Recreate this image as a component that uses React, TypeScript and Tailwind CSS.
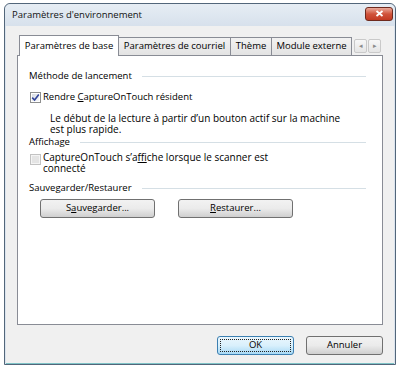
import React from "react";

const font = "font-['Open_Sans',sans-serif] text-[9.5px] text-black";

function Check({ checked, disabled }: { checked?: boolean; disabled?: boolean }) {
  return (
    <span
      className={`flex h-[11px] w-[11px] shrink-0 items-center justify-center border ${
        disabled ? "border-[#c2c2c2] bg-[#f4f4f4]" : "border-[#8e8f8f] bg-white"
      }`}
    >
      <span
        className={`flex h-[7px] w-[7px] items-center justify-center ${
          disabled ? "bg-[#e4e4e4]" : "bg-gradient-to-br from-[#d8dde3] to-[#f6f7f9]"
        }`}
      >
        {checked && (
          <svg width="9" height="9" viewBox="0 0 9 9" className="overflow-visible">
            <path d="M1.2 4.6 L3.6 7 L7.8 1.6" fill="none" stroke="#31449a" strokeWidth="1.6" />
          </svg>
        )}
      </span>
    </span>
  );
}

function GroupTitle({ title }: { title: string }) {
  return (
    <div className="flex items-center gap-[10px] leading-[12px]">
      <span>{title}</span>
      <div className="h-px flex-1 bg-[#d5dfe5]" />
    </div>
  );
}

function Btn({ children, w, primary }: { children: React.ReactNode; w: string; primary?: boolean }) {
  return (
    <div
      className={`${w} flex h-[19px] items-center justify-center rounded-[3px] border ${
        primary
          ? "border-[#3c7fb1] bg-gradient-to-b from-[#eaf6fd] via-[#d9f0fc] to-[#a7d9f5] p-[2px]"
          : "border-[#707070] bg-gradient-to-b from-[#f2f2f2] via-[#ebebeb] to-[#cfcfcf]"
      }`}
    >
      {primary ? (
        <div className="flex h-full w-full items-center justify-center border border-dotted border-[#222]">
          {children}
        </div>
      ) : (
        children
      )}
    </div>
  );
}

const tabs = ["Paramètres de courriel", "Thème", "Module externe"];
const tabW = ["w-[112px]", "w-[41px]", "w-[80px]"];

export default function App() {
  return (
    <div className={`${font} h-[367px] w-[399px] bg-white pl-[4px] pt-[3px]`}>
      <div className="flex h-[362px] w-[392px] flex-col rounded-t-[6px] border border-[#52667a] bg-[#dbe4ee]">
        {/* title bar */}
        <div className="flex h-[22px] items-center justify-between rounded-t-[6px] bg-gradient-to-b from-[#e6edf4] to-[#d7e1ec] pl-[7px] pr-[2px]">
          <span className="text-[9.5px] text-[#111]">Paramètres d'environnement</span>
          <div className="mb-[3px] flex h-[14px] w-[28px] items-center justify-center rounded-[3px] border border-[#6e2a1e] bg-gradient-to-b from-[#e9a99a] via-[#d0533b] to-[#c23a22]">
            <svg width="9" height="7" viewBox="0 0 9 7">
              <path d="M1.5 1 L7.5 6 M7.5 1 L1.5 6" stroke="white" strokeWidth="1.8" />
            </svg>
          </div>
        </div>

        {/* client */}
        <div className="mx-px flex flex-1 flex-col bg-[#f0f0f0] px-[11px] pt-[8px]">
          {/* tab strip */}
          <div className="flex h-[21px] items-end pl-[2px]">
            <div className="relative z-10 -mb-px flex h-[21px] w-[100px] items-center justify-center border border-b-0 border-[#898c95] bg-white">
              Paramètres de base
            </div>
            {tabs.map((t, i) => (
              <div
                key={t}
                className={`${tabW[i]} flex h-[18px] items-center justify-center border border-l-0 border-b-0 border-[#898c95] bg-gradient-to-b from-[#f2f2f2] to-[#e3e3e3]`}
              >
                {t}
              </div>
            ))}
            <div className="mb-[2px] ml-[2px] flex gap-px">
              {["◂", "▸"].map((a) => (
                <div
                  key={a}
                  className="flex h-[14px] w-[13px] items-center justify-center rounded-[2px] border border-[#c9c9c9] bg-gradient-to-b from-[#f7f7f7] to-[#e5e5e5] text-[7px] text-[#8a8a8a]"
                >
                  {a}
                </div>
              ))}
            </div>
          </div>

          {/* panel */}
          <div className="flex h-[270px] flex-col border border-[#898c95] bg-white pl-[11px] pr-[16px] pt-[14px]">
            <GroupTitle title="Méthode de lancement" />
            <div className="mt-[9px] flex items-center gap-[2px] pl-[1px] leading-[12px]">
              <Check checked />
              <span>
                Rendre <span className="underline">C</span>aptureOnTouch résident
              </span>
            </div>
            <div className="mt-[10px] pl-[21px] pr-[14px] text-[10px] leading-[11px]">
              Le début de la lecture à partir d’un bouton actif sur la machine est plus rapide.
            </div>
            <div className="mt-[1px]">
              <GroupTitle title="Affichage" />
            </div>
            <div className="mt-[4px] flex items-start gap-[2px] pl-[1px] text-[10px] leading-[11px]">
              <div className="pt-[2px]">
                <Check disabled />
              </div>
              <span className="w-[245px]">
                CaptureOnTouch s’a<span className="underline">f</span>fiche lorsque le scanner est connecté
              </span>
            </div>
            <div className="mt-[8px]">
              <GroupTitle title="Sauvegarder/Restaurer" />
            </div>
            <div className="mt-[5px] flex gap-[23px] pl-[11px]">
              <Btn w="w-[115px]">
                <span>
                  S<span className="underline">a</span>uvegarder...
                </span>
              </Btn>
              <Btn w="w-[115px]">
                <span>
                  <span className="underline">R</span>estaurer...
                </span>
              </Btn>
            </div>
          </div>

          {/* footer buttons */}
          <div className="mt-[11px] flex justify-end gap-[12px]">
            <Btn w="w-[77px]" primary>
              OK
            </Btn>
            <Btn w="w-[77px]">Annuler</Btn>
          </div>
          <div className="flex-1" />
        </div>
        <div className="mx-px h-px bg-[#7fc3c6]" />
      </div>
    </div>
  );
}
